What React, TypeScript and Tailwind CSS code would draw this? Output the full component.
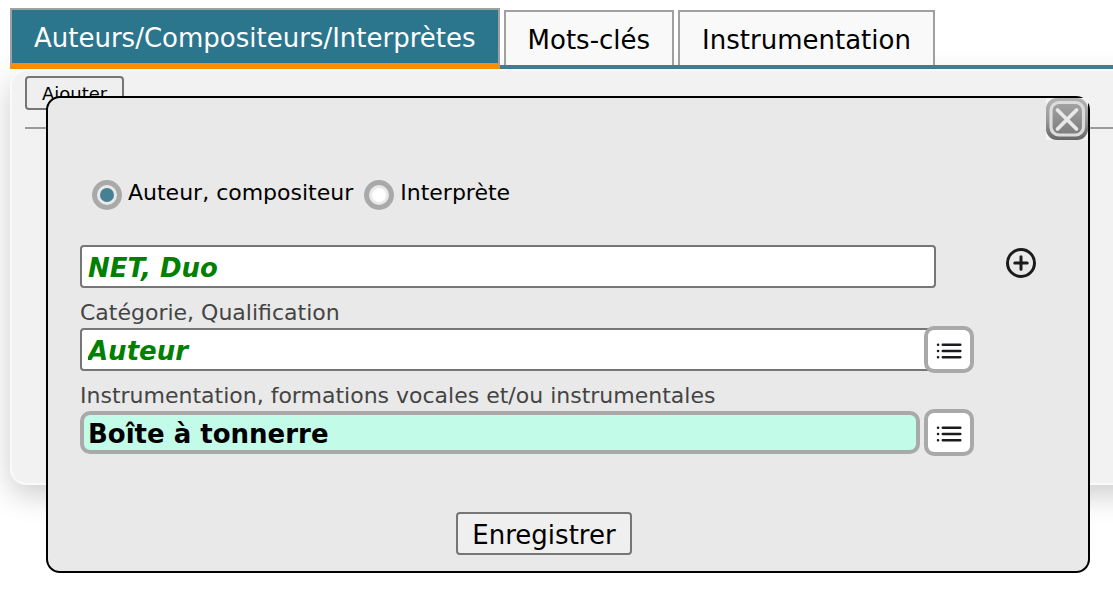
import { useState } from "react";

const TABS = ["Auteurs/Compositeurs/Interprètes", "Mots-clés", "Instrumentation"];

const ROLES = ["Auteur, compositeur", "Interprète"];

function CloseIcon() {
  return (
    <svg viewBox="0 0 42 42" className="size-[42px]" aria-hidden="true">
      <defs>
        <linearGradient id="rim" x1="0" y1="0" x2="0" y2="1">
          <stop offset="0" stopColor="#b4b4b4" />
          <stop offset="0.5" stopColor="#9a9a9a" />
          <stop offset="1" stopColor="#666666" />
        </linearGradient>
        <linearGradient id="face" x1="0" y1="0" x2="0" y2="1">
          <stop offset="0" stopColor="#a4a4a4" />
          <stop offset="1" stopColor="#7c7c7c" />
        </linearGradient>
      </defs>
      <rect width="42" height="42" fill="#f4f4f4" />
      <rect width="42" height="42" rx="11" fill="url(#rim)" />
      <rect x="5" y="4.5" width="32.5" height="32.5" rx="8" fill="url(#face)" stroke="#dcdcdc" strokeWidth="3.2" />
      <path d="M11.5 12 L30.5 31 M30.5 12 L11.5 31" stroke="#e8e8e8" strokeWidth="3.8" strokeLinecap="round" />
    </svg>
  );
}

function PlusIcon() {
  return (
    <svg viewBox="0 0 30 30" className="size-[30px]" fill="none" stroke="#1b1b1d" aria-hidden="true">
      <circle cx="15" cy="15" r="13.5" strokeWidth="3" />
      <path d="M15 8.8 V21.2 M8.8 15 H21.2" strokeWidth="3" strokeLinecap="round" />
    </svg>
  );
}

function ListIcon() {
  return (
    <svg viewBox="0 0 26 18" className="h-[18px] w-[26px] shrink-0" fill="none" stroke="#1b1b1d" strokeWidth="2.5" strokeLinecap="round" aria-hidden="true">
      <path d="M6.8 3.8 H24.3 M6.8 10 H24.3 M6.8 16.2 H24.3" />
      <path d="M2 3.8 H2.1 M2 10 H2.1 M2 16.2 H2.1" />
    </svg>
  );
}

function ListButton({ label, className = "" }: { label: string; className?: string }) {
  return (
    <button
      type="button"
      aria-label={label}
      className={`flex h-[47px] w-[50px] shrink-0 items-center justify-center rounded-[10px] border-4 border-[#a9a9a9] bg-white ${className}`}
    >
      <ListIcon />
    </button>
  );
}

export default function App() {
  const [tab, setTab] = useState(0);
  const [role, setRole] = useState(0);
  const [name, setName] = useState("NET, Duo");
  const [category, setCategory] = useState("Auteur");
  const [instrument, setInstrument] = useState("Boîte à tonnerre");

  return (
    <div className="relative min-h-screen overflow-hidden bg-white pt-2 pl-2.5 font-['Verdana','DejaVu_Sans',sans-serif] text-black">
      {/* tabs */}
      <nav className="flex items-end gap-1 border-b-4 border-[#41839a]">
        {TABS.map((t, i) => (
          <button
            key={t}
            type="button"
            onClick={() => setTab(i)}
            className={`shrink-0 border-2 px-[22px] pt-1 text-[26px] leading-[49px] whitespace-nowrap ${
              tab === i
                ? "-mb-1 border-[#a0a0a0] border-b-6 border-b-[#ff8c00] bg-[#2b758d] text-white"
                : "border-[#a0a0a0] border-b-0 bg-[#f9f9f9]"
            }`}
          >
            {t}
          </button>
        ))}
      </nav>

      {/* panel */}
      <section className="-mr-10 min-h-[416px] rounded-2xl border-2 border-[#fafafa] bg-[#f2f2f2] px-[13px] pt-[5px] shadow-[0_10px_30px_rgba(0,0,0,0.2)]">
        <button type="button" className="h-[34px] rounded border-2 border-[#767676] bg-[#efefef] px-[15px] pt-0.5 text-lg">
          Ajouter
        </button>
        <hr className="mt-[17px] border-t-2 border-[#9a9a9a]" />
      </section>

      {/* dialog */}
      <form
        role="dialog"
        aria-label={TABS[0]}
        onSubmit={(e) => e.preventDefault()}
        className="absolute top-24 right-[23px] left-[46px] rounded-[14px] border-2 border-black bg-[#e9e9e9] pb-4"
      >
        <div className="flex justify-end">
          <button type="button" aria-label="Fermer">
            <CloseIcon />
          </button>
        </div>

        <div className="pr-[42px] pl-8">
          <div className="flex gap-[11px] pt-10 pl-3">
            {ROLES.map((r, i) => (
              <label key={r} className="flex gap-1.5 text-[22px] leading-[26px]">
                <input
                  type="radio"
                  name="role"
                  checked={role === i}
                  onChange={() => setRole(i)}
                  className="size-[30px] shrink-0 appearance-none rounded-full border-5 border-[#a9a9a9] bg-white bg-clip-content p-[3px] checked:bg-[#468094]"
                />
                {r}
              </label>
            ))}
          </div>

          <div className="mt-[33px] flex items-center gap-[60px]">
            <input
              type="text"
              aria-label="Nom"
              value={name}
              onChange={(e) => setName(e.target.value)}
              className="h-[43px] min-w-0 flex-1 rounded border-2 border-[#767676] bg-white px-1.5 pt-0.5 text-[26px] font-bold text-[#008000] italic"
            />
            <button type="button" aria-label="Nouveau" className="flex h-[47px] w-[50px] shrink-0 justify-center pt-[5px]">
              <PlusIcon />
            </button>
          </div>

          <label htmlFor="category" className="block pt-2.5 text-[22px] leading-[26px] text-[#444444]">
            Catégorie, Qualification
          </label>
          <div className="flex items-center pr-[72px]">
            <input
              id="category"
              type="text"
              value={category}
              onChange={(e) => setCategory(e.target.value)}
              className="h-[43px] min-w-0 flex-1 rounded border-2 border-[#767676] bg-white px-1.5 pt-0.5 text-[26px] font-bold text-[#008000] italic"
            />
            <ListButton label="Liste des catégories" className="-ml-3" />
          </div>

          <label htmlFor="instrument" className="block pt-2.5 text-[22px] leading-[26px] text-[#444444]">
            Instrumentation, formations vocales et/ou instrumentales
          </label>
          <div className="flex items-center gap-1 pr-[72px]">
            <input
              id="instrument"
              type="text"
              value={instrument}
              onChange={(e) => setInstrument(e.target.value)}
              className="h-[43px] min-w-0 flex-1 rounded-[10px] border-4 border-[#a9a9a9] bg-[#c3fbe9] px-1 pt-0.5 text-[26px] font-bold"
            />
            <ListButton label="Liste des instruments" />
          </div>

          <div className="mt-14 flex justify-center pr-[38px]">
            <button type="submit" className="h-[43px] rounded border-2 border-[#767676] bg-[#efefef] px-3.5 pt-0.5 text-[26px] leading-9">
              Enregistrer
            </button>
          </div>
        </div>
      </form>
    </div>
  );
}
